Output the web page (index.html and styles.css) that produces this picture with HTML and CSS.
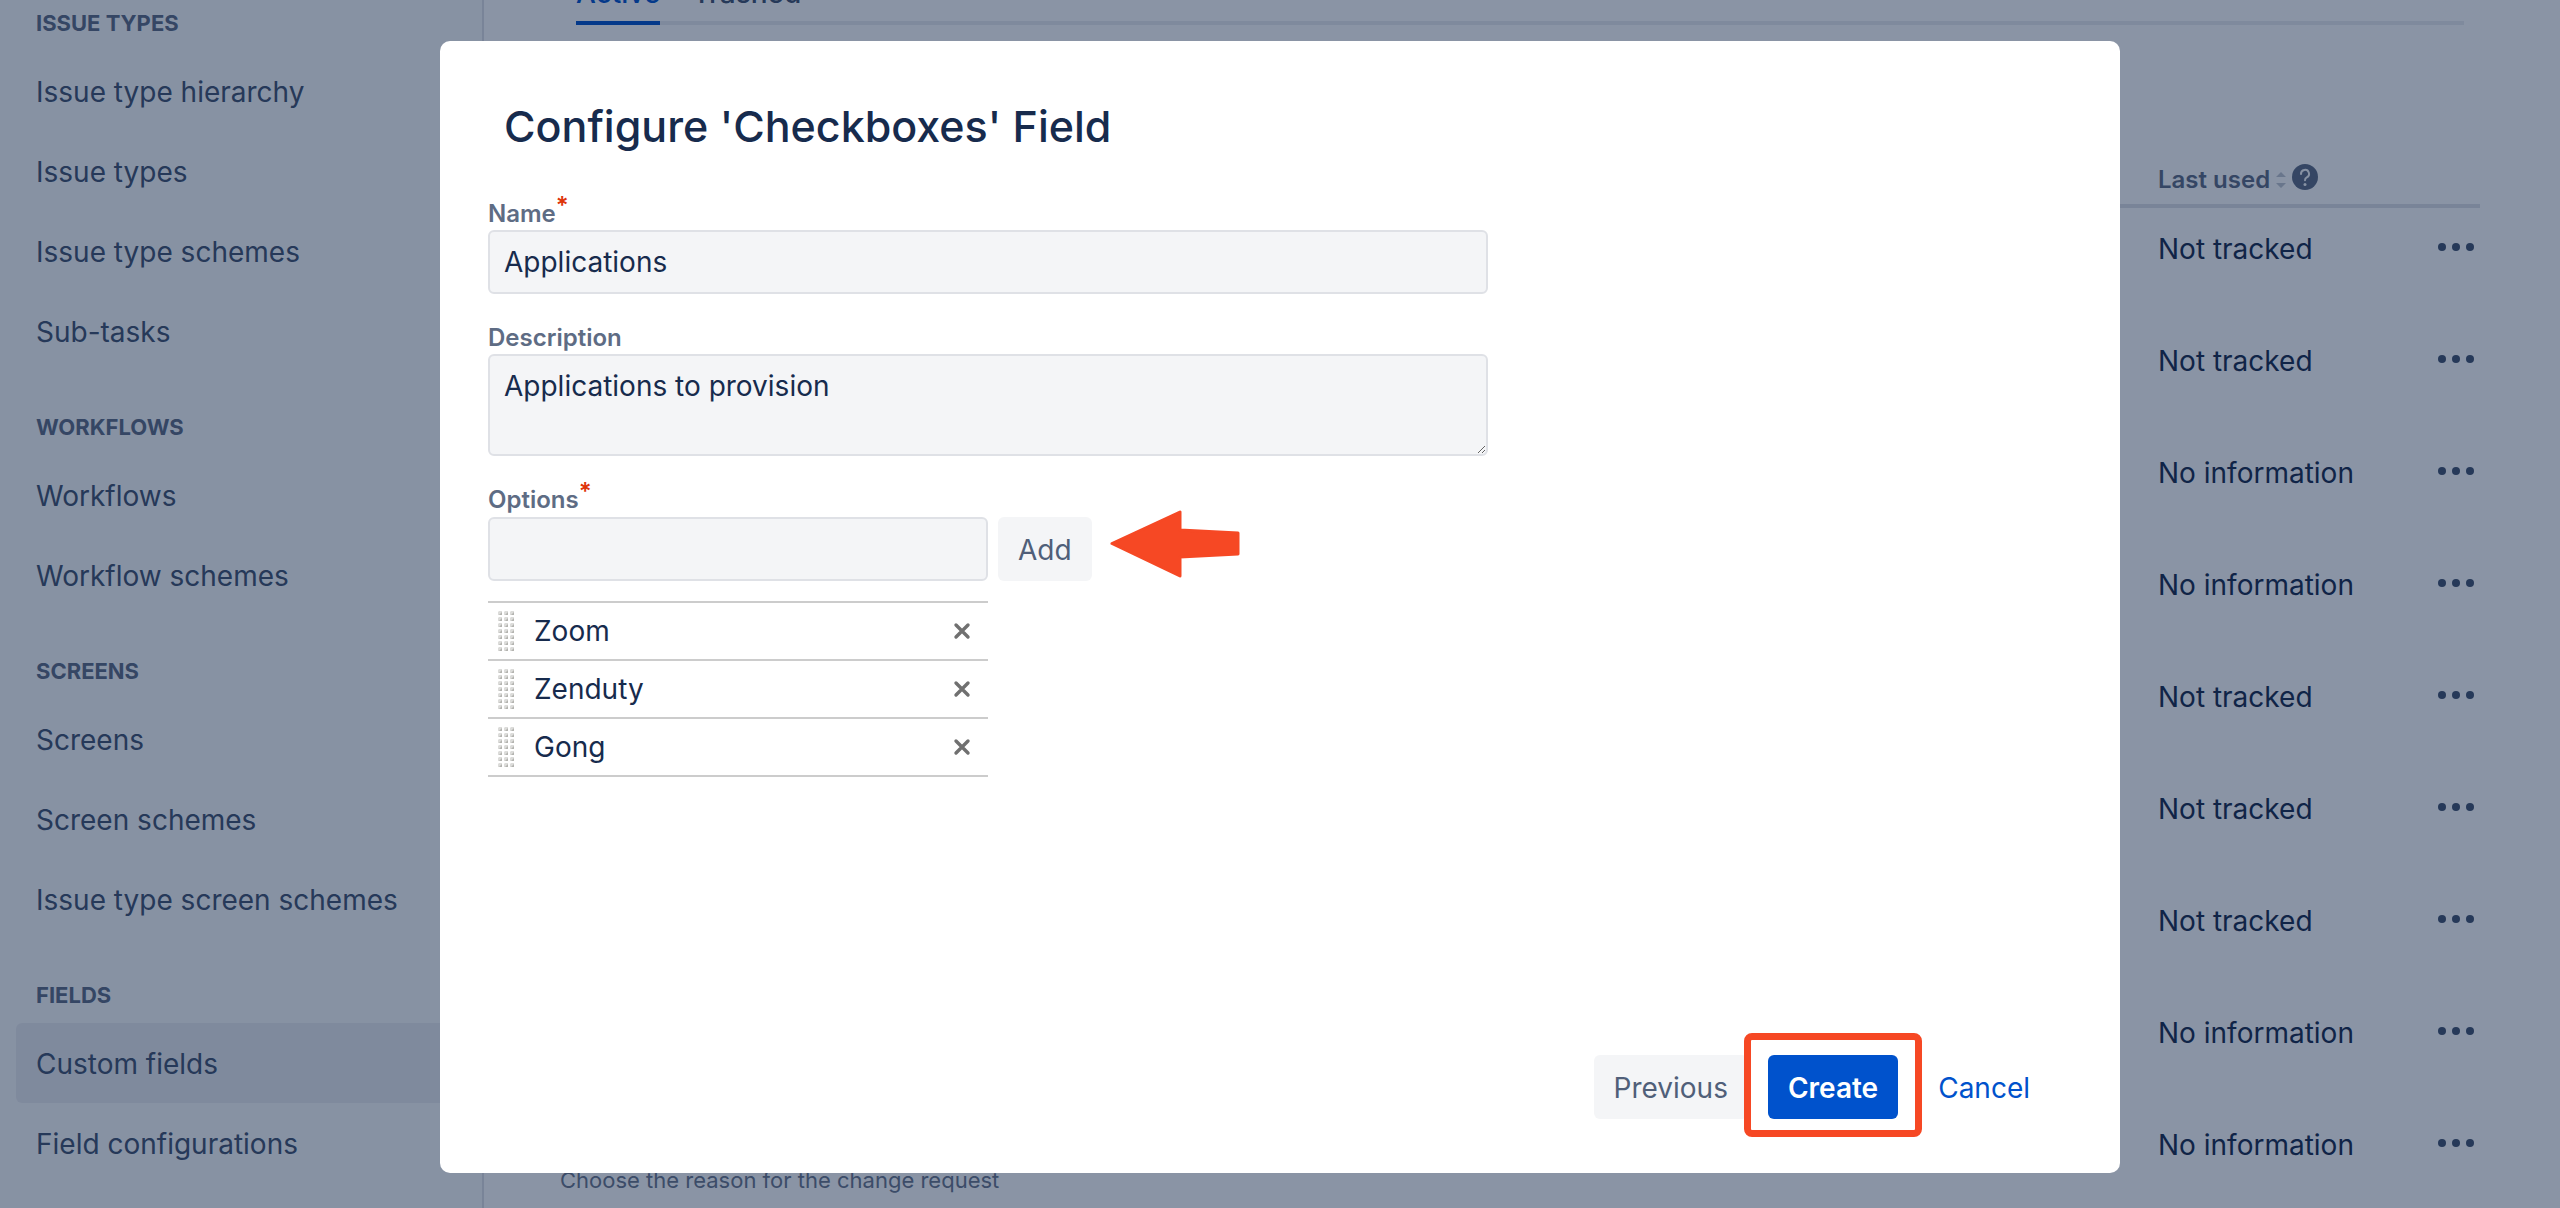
FILE: index.html
```html
<!DOCTYPE html>
<html lang="en">
<head>
<meta charset="utf-8">
<title>Custom fields</title>
<link rel="stylesheet" href="styles.css">
</head>
<body>
<svg class="defs" aria-hidden="true">
  <defs>
    <pattern id="grip-dot" width="6" height="6" patternUnits="userSpaceOnUse">
      <path d="M0 4V1L1 0H4V4Z" fill="#dcdcda"/>
      <path d="M1 4L4 1V4Z" fill="#b4b4b0"/>
    </pattern>
    <symbol id="grip" viewBox="0 0 16 40"><rect width="16" height="40" fill="url(#grip-dot)"/></symbol>
    <symbol id="cross" viewBox="0 0 18 18"><path d="M3 3L15 15M15 3L3 15" stroke="#707070" stroke-width="3.4" stroke-linecap="round"/></symbol>
    <symbol id="more" viewBox="0 0 36 8"><circle cx="4" cy="4" r="4"/><circle cx="18" cy="4" r="4"/><circle cx="32" cy="4" r="4"/></symbol>
  </defs>
</svg>

<div class="app">
  <nav class="sidebar" aria-label="Settings">
    <h2 class="nav-heading">ISSUE TYPES</h2>
    <a class="nav-item" href="#">Issue type hierarchy</a>
    <a class="nav-item" href="#">Issue types</a>
    <a class="nav-item" href="#">Issue type schemes</a>
    <a class="nav-item" href="#">Sub-tasks</a>
    <h2 class="nav-heading">WORKFLOWS</h2>
    <a class="nav-item" href="#">Workflows</a>
    <a class="nav-item" href="#">Workflow schemes</a>
    <h2 class="nav-heading">SCREENS</h2>
    <a class="nav-item" href="#">Screens</a>
    <a class="nav-item" href="#">Screen schemes</a>
    <a class="nav-item" href="#">Issue type screen schemes</a>
    <h2 class="nav-heading">FIELDS</h2>
    <a class="nav-item nav-item-current" href="#">Custom fields</a>
    <a class="nav-item" href="#">Field configurations</a>
  </nav>

  <main class="content">
    <nav class="tabs">
      <a class="tab tab-active" href="#">Active</a>
      <a class="tab" href="#">Trashed</a>
    </nav>
    <table class="fields">
      <thead>
        <tr>
          <th class="col-name"></th>
          <th class="col-used">
            <div class="head-cell">
              <span>Last used</span>
              <svg class="sort" viewBox="0 0 10 16" aria-hidden="true"><path d="M5 0L10 5H0ZM5 16L0 11H10Z" fill="#c1c7d0"/></svg>
              <svg class="help" viewBox="0 0 26 26" aria-hidden="true"><circle cx="13" cy="13" r="13" fill="#5e6c84"/><path d="M9 10A4 4 0 1 1 14.8 13.4Q13 14.4 13 16.2" fill="none" stroke="#fafbfc" stroke-width="2" stroke-linecap="round"/><circle cx="13" cy="20.4" r="1.5" fill="#fafbfc"/></svg>
            </div>
          </th>
          <th class="col-actions"></th>
        </tr>
      </thead>
      <tbody>
        <tr><td></td><td>Not tracked</td><td><button class="more" type="button" aria-label="More"><svg><use href="#more"/></svg></button></td></tr>
        <tr><td></td><td>Not tracked</td><td><button class="more" type="button" aria-label="More"><svg><use href="#more"/></svg></button></td></tr>
        <tr><td></td><td>No information</td><td><button class="more" type="button" aria-label="More"><svg><use href="#more"/></svg></button></td></tr>
        <tr><td></td><td>No information</td><td><button class="more" type="button" aria-label="More"><svg><use href="#more"/></svg></button></td></tr>
        <tr><td></td><td>Not tracked</td><td><button class="more" type="button" aria-label="More"><svg><use href="#more"/></svg></button></td></tr>
        <tr><td></td><td>Not tracked</td><td><button class="more" type="button" aria-label="More"><svg><use href="#more"/></svg></button></td></tr>
        <tr><td></td><td>Not tracked</td><td><button class="more" type="button" aria-label="More"><svg><use href="#more"/></svg></button></td></tr>
        <tr><td></td><td>No information</td><td><button class="more" type="button" aria-label="More"><svg><use href="#more"/></svg></button></td></tr>
        <tr><td><p class="summary">Choose the reason for the change request</p></td><td>No information</td><td><button class="more" type="button" aria-label="More"><svg><use href="#more"/></svg></button></td></tr>
      </tbody>
    </table>
  </main>
</div>

<div class="blanket">
  <form class="dialog" role="dialog" aria-labelledby="dialog-title">
    <h1 class="dialog-title" id="dialog-title">Configure 'Checkboxes' Field</h1>

    <div class="field">
      <label class="label" for="name">Name<span class="required">*</span></label>
      <input class="input" id="name" type="text" value="Applications">
    </div>

    <div class="field">
      <label class="label" for="description">Description</label>
      <textarea class="input input-area" id="description">Applications to provision</textarea>
    </div>

    <div class="field">
      <label class="label" for="option">Options<span class="required">*</span></label>
      <div class="option-entry">
        <input class="input input-option" id="option" type="text">
        <button class="button" type="button">Add</button>
        <svg class="pointer" viewBox="0 0 130 68" aria-hidden="true"><path d="M2 33.5L70 2V20L128 23V44L70 47V66Z" fill="#f64824" stroke="#f64824" stroke-width="3" stroke-linejoin="round"/></svg>
      </div>
      <ul class="options">
        <li class="option"><svg class="grip"><use href="#grip"/></svg><span class="option-name">Zoom</span><button class="remove" type="button" aria-label="Remove Zoom"><svg><use href="#cross"/></svg></button></li>
        <li class="option"><svg class="grip"><use href="#grip"/></svg><span class="option-name">Zenduty</span><button class="remove" type="button" aria-label="Remove Zenduty"><svg><use href="#cross"/></svg></button></li>
        <li class="option"><svg class="grip"><use href="#grip"/></svg><span class="option-name">Gong</span><button class="remove" type="button" aria-label="Remove Gong"><svg><use href="#cross"/></svg></button></li>
      </ul>
    </div>

    <div class="dialog-footer">
      <button class="button" type="button">Previous</button>
      <div class="highlight"><button class="button button-primary" type="submit">Create</button></div>
      <a class="cancel" href="#">Cancel</a>
    </div>
  </form>
</div>
</body>
</html>
```

FILE: styles.css
```css
* {
  box-sizing: border-box;
}

body {
  margin: 0;
  height: 100vh;
  overflow: hidden;
  background: #fff;
  color: #172b4d;
  font-family: Inter, "Liberation Sans", sans-serif;
  font-size: 28px;
  line-height: 40px;
}

h1,
h2,
p,
ul {
  margin: 0;
  padding: 0;
}

a {
  text-decoration: none;
}

button,
input,
textarea {
  font: inherit;
}

button {
  border: 0;
  background: none;
  padding: 0;
}

.defs {
  position: absolute;
  width: 0;
  height: 0;
}

/* Page behind the dialog, scrolled down a little */
.app {
  display: flex;
  min-height: calc(100vh + 33px);
  margin-top: -33px;
}

.sidebar {
  flex: 0 0 484px;
  padding: 0 14px 0 16px;
  border-right: 2px solid #dfe1e6;
  background: #fafbfc;
}

.nav-heading {
  padding: 40px 20px 12px;
  color: #5e6c84;
  font-size: 22px;
  font-weight: 700;
  line-height: 32px;
}

.nav-item {
  display: block;
  padding: 21px 20px 19px;
  border-radius: 6px;
  color: #42526e;
}

.nav-item-current {
  background: #ebecf0;
}

.content {
  flex: 1;
  min-width: 0;
  padding: 0 80px 0 76px;
}

.tabs {
  display: flex;
  gap: 32px;
  margin: 0 16px 119px;
  box-shadow: inset 0 -4px #ebecf0;
}

.tab {
  padding: 6px 0 8px;
  border-bottom: 4px solid transparent;
  color: #42526e;
  font-weight: 500;
}

.tab-active {
  border-color: #0052cc;
  color: #0052cc;
}

.fields {
  width: 100%;
  border-collapse: separate;
  border-spacing: 0;
  table-layout: fixed;
}

.fields th {
  height: 64px;
  padding: 0 0 8px 18px;
  border-bottom: 4px solid #dfe1e6;
  vertical-align: bottom;
  text-align: left;
}

.fields td {
  height: 112px;
  padding: 21px 0 0 18px;
  vertical-align: top;
}

.fields td:first-child {
  padding-left: 0;
}

.col-used {
  width: 280px;
}

.col-actions {
  width: 60px;
}

.head-cell {
  display: flex;
  align-items: center;
  gap: 6px;
  color: #5e6c84;
  font-size: 24px;
  font-weight: 600;
  line-height: 32px;
}

.sort {
  width: 10px;
  height: 16px;
}

.help {
  width: 26px;
  height: 26px;
  margin-bottom: 6px;
}

.more {
  display: flex;
  align-items: center;
  height: 36px;
  fill: #42526e;
}

.more svg {
  width: 36px;
  height: 8px;
}

.summary {
  padding-top: 39px;
  color: #6b778c;
  font-size: 22px;
  line-height: 32px;
}

/* Dialog */
.blanket {
  position: fixed;
  inset: 0;
  display: flex;
  justify-content: center;
  padding: 41px 0 35px;
  background: rgba(9, 30, 66, 0.476);
}

.dialog {
  display: flex;
  flex-direction: column;
  width: 100%;
  max-width: 1680px;
  padding: 57px 48px 54px;
  border-radius: 10px;
  background: #fff;
}

.dialog-title {
  margin: 0 16px 43px;
  font-size: 43px;
  font-weight: 500;
  line-height: 56px;
}

.field {
  display: flex;
  flex-direction: column;
  margin-bottom: 27px;
}

.label {
  padding-top: 1px;
  color: #5e6c84;
  font-size: 24px;
  font-weight: 600;
  line-height: 32px;
}

.required {
  position: relative;
  top: -8px;
  color: #de350b;
}

.input {
  width: 100%;
  max-width: 1000px;
  height: 64px;
  padding: 0 14px;
  border: 2px solid #dfe1e6;
  border-radius: 6px;
  background: #f4f5f7;
  color: #172b4d;
}

.input-area {
  height: 102px;
  padding: 10px 14px;
  resize: vertical;
}

.option-entry {
  display: flex;
  align-items: center;
}

.input-option {
  width: 500px;
}

.button {
  height: 64px;
  padding: 1px 20px 0;
  border-radius: 6px;
  background: #f4f5f7;
  color: #505f79;
}

.option-entry .button {
  margin: 0 18px 0 10px;
}

.pointer {
  width: 130px;
  height: 68px;
  margin: -6px 0 4px;
}

.options {
  width: 500px;
  margin-top: 19px;
  border-top: 2px solid #ccc;
  list-style: none;
}

.option {
  display: flex;
  align-items: center;
  height: 58px;
  padding: 0 17px 0 10px;
  border-bottom: 2px solid #ccc;
}

.grip {
  width: 16px;
  height: 40px;
}

.option-name {
  flex: 1;
  padding-left: 20px;
}

.remove {
  display: flex;
}

.remove svg {
  width: 18px;
  height: 18px;
}

.dialog-footer {
  display: flex;
  align-items: center;
  justify-content: flex-end;
  margin-top: auto;
  padding-right: 42px;
}

.highlight {
  position: relative;
  margin: 0 40px 0 20px;
}

.highlight::before {
  content: "";
  position: absolute;
  inset: -22px -24px -18px;
  border: 7px solid #f64824;
  border-radius: 8px;
  background: #fff;
}

.button-primary {
  position: relative;
  background: #0052cc;
  color: #fff;
  font-weight: 600;
}

.cancel {
  padding-top: 1px;
  color: #0052cc;
}
```
